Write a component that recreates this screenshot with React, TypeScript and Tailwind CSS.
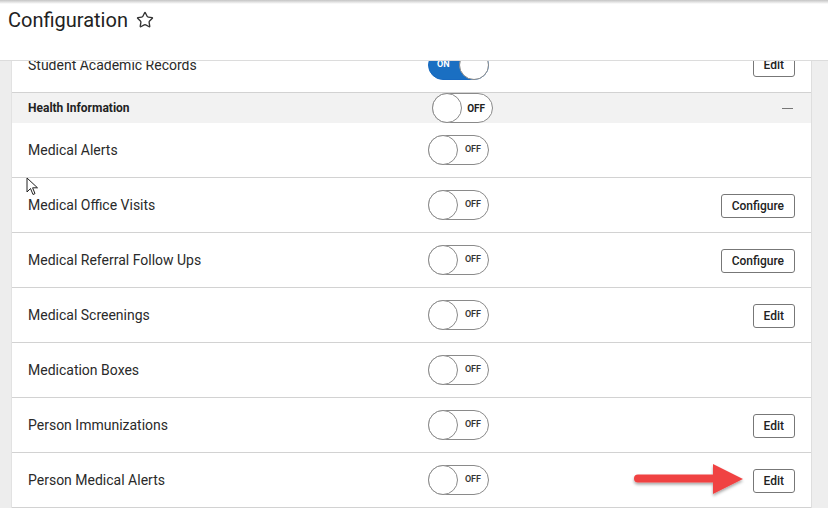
import { Star } from 'lucide-react'

type Row = { label: string; action?: 'Edit' | 'Configure'; on?: boolean }

const rows: Row[] = [
  { label: 'Medical Alerts' },
  { label: 'Medical Office Visits', action: 'Configure' },
  { label: 'Medical Referral Follow Ups', action: 'Configure' },
  { label: 'Medical Screenings', action: 'Edit' },
  { label: 'Medication Boxes' },
  { label: 'Person Immunizations', action: 'Edit' },
  { label: 'Person Medical Alerts', action: 'Edit' },
]

function Toggle({ on = false, big = false }: { on?: boolean; big?: boolean }) {
  if (on) {
    return (
      <div className="relative flex h-[30px] w-[61px] items-center rounded-full border border-[#1769c0] bg-[#1a6fc2]">
        <span className="pl-[8px] text-[9px] font-bold text-white">ON</span>
        <span className="absolute right-[-1px] top-[-1px] h-[30px] w-[30px] rounded-full border border-[#888] bg-white" />
      </div>
    )
  }
  return (
    <div className="relative flex h-[30px] w-[61px] items-center justify-end rounded-full border border-[#8a8a8a] bg-white">
      <span className="absolute left-[-1px] top-[-1px] h-[30px] w-[30px] rounded-full border border-[#8a8a8a] bg-white" />
      <span className={big ? 'pr-[7px] text-[10px] font-bold text-[#222]' : 'pr-[7px] text-[9px] font-semibold text-[#333]'}>
        OFF
      </span>
    </div>
  )
}

function ActionButton({ label }: { label: string }) {
  return (
    <button className="h-[24px] rounded-[3px] border border-[#777] bg-white px-[10px] text-[12px] font-medium text-[#222]">
      {label}
    </button>
  )
}

function RedArrow() {
  return (
    <svg width="120" height="40" viewBox="0 0 120 40" className="absolute left-[-123px] top-[-6px]">
      <defs>
        <filter id="sh" x="-20%" y="-40%" width="140%" height="180%">
          <feDropShadow dx="0" dy="2" stdDeviation="1.5" floodColor="#000" floodOpacity="0.35" />
        </filter>
      </defs>
      <g filter="url(#sh)">
        <path d="M8 16.5 H86" stroke="#f04343" strokeWidth="8" strokeLinecap="round" />
        <path d="M83 2 L113 17 L83 32 Z" fill="#f04343" />
      </g>
    </svg>
  )
}

function ConfigRow({ row, last }: { row: Row; last?: boolean }) {
  return (
    <div className="grid h-[55px] grid-cols-[400px_1fr] items-center border-b border-[#d2d2d2] pl-[16px] pr-[16px]">
      <span className="text-[14px] text-[#2a2a2a]">{row.label}</span>
      <div className="flex items-center justify-between">
        <Toggle on={row.on} />
        {row.action && (
          <div className="relative">
            {last && <RedArrow />}
            <ActionButton label={row.action} />
          </div>
        )}
      </div>
    </div>
  )
}

export default function App() {
  return (
    <div className="relative flex h-[508px] w-[828px] flex-col overflow-hidden bg-white" style={{ fontFamily: 'Roboto, "Liberation Sans", sans-serif' }}>
      {/* Header */}
      <div className="relative z-10 h-[61px] shrink-0 border-b border-[#dcdcdc] bg-white">
        <div className="h-[4px] bg-gradient-to-b from-[#c4c4c4] to-white" />
        <div className="flex items-center gap-[8px] pl-[8px] pt-[4px]">
          <h1 className="text-[20px] leading-[24px] text-[#222]">Configuration</h1>
          <Star size={18} strokeWidth={1.8} className="text-[#333]" />
        </div>
      </div>

      {/* Body */}
      <div className="flex min-h-0 flex-1">
        <div className="w-[12px] shrink-0 border-r border-[#e2e2e2] bg-[#ededed]" />
        <div className="min-w-0 flex-1 overflow-hidden">
          <div className="mt-[-23px]">
            <div className="grid h-[55px] grid-cols-[400px_1fr] items-center border-b border-[#d2d2d2] pl-[16px] pr-[16px]">
              <span className="text-[14px] text-[#2a2a2a]">Student Academic Records</span>
              <div className="flex items-center justify-between">
                <Toggle on />
                <ActionButton label="Edit" />
              </div>
            </div>
            <div className="grid h-[30px] grid-cols-[404px_1fr] items-center bg-[#f2f2f2] pl-[16px] pr-[16px]">
              <span className="text-[12px] font-bold text-[#222]">Health Information</span>
              <div className="flex items-center justify-between">
                <Toggle big />
                <span className="mr-[2px] h-[1px] w-[11px] bg-[#777]" />
              </div>
            </div>
            {rows.map((r, i) => (
              <ConfigRow key={r.label} row={r} last={i === rows.length - 1} />
            ))}
          </div>
        </div>
        <div className="w-[17px] shrink-0 border-l border-[#dedede] bg-[#eeeeee]" />
      </div>

      {/* mouse cursor */}
      <svg width="14" height="20" viewBox="0 0 14 20" className="absolute left-[26px] top-[177px]">
        <path d="M1 1 L1 15 L4.5 11.5 L7 17.5 L9 16.6 L6.6 10.8 L11.5 10.8 Z" fill="white" stroke="#222" strokeWidth="1" strokeLinejoin="round" />
      </svg>
    </div>
  )
}
